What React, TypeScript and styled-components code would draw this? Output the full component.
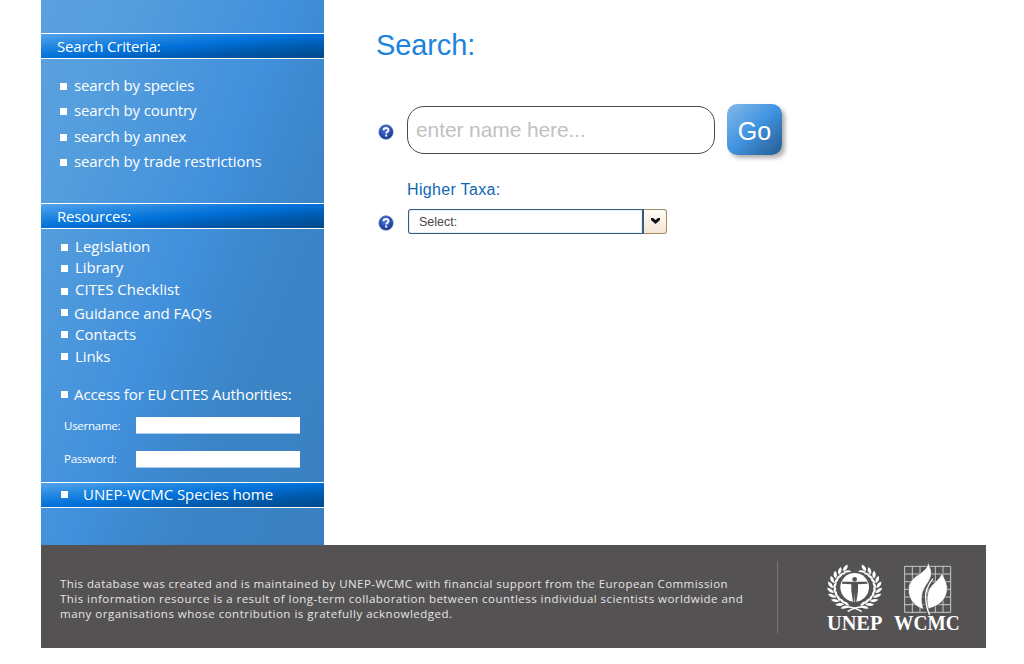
import React from "react";
import styled, { createGlobalStyle } from "styled-components";

const GlobalStyle = createGlobalStyle`
  * { box-sizing: border-box; }
  body { margin: 0; background: #fff; font-family: "Open Sans", "Noto Sans", sans-serif; }
  ul { list-style: none; margin: 0; padding: 0; }
  p, h1, h2 { margin: 0; font-weight: 400; }
`;

const Page = styled.div`
  width: 1024px;
  height: 664px;
  padding-left: 41px;
  overflow: hidden;
  background: #fff;
`;

const Columns = styled.div`
  display: flex;
  height: 545px;
`;

const Sidebar = styled.nav`
  width: 283px;
  height: 545px;
  padding-top: 33px;
  color: #fff;
  background: linear-gradient(112deg, #5ba0df 0%, #559edd 18%, #4190dc 49%, #3b84c6 70%, #3a80c1 100%);
`;

const Band = styled.h2<{ $inset?: number; $gap?: number }>`
  display: flex;
  align-items: center;
  gap: ${(p) => p.$gap ?? 0}px;
  height: 26px;
  padding: 0 0 1px ${(p) => p.$inset ?? 16}px;
  border-top: 1px solid #fff;
  border-bottom: 1px solid #fff;
  background: linear-gradient(to bottom right, #55a3ea 0%, #2186e0 28%, #0070d9 50%, #0058a8 75%, #004a8c 100%);
`;

const Bullet = styled.span<{ $drop?: number }>`
  flex: none;
  width: 7px;
  height: 7px;
  margin-top: ${(p) => p.$drop ?? 0}px;
  background: #fff;
`;

const List = styled.ul<{ $top: number; $height: number; $left: number }>`
  height: ${(p) => p.$height}px;
  padding: ${(p) => p.$top}px 0 0 ${(p) => p.$left}px;
`;

const Item = styled.li<{ $height: number; $gap?: number }>`
  display: flex;
  align-items: center;
  gap: ${(p) => p.$gap ?? 7}px;
  height: ${(p) => p.$height}px;
`;

const Label = styled.span<{ $spacing?: number; $lift?: number }>`
  padding-bottom: ${(p) => p.$lift ?? 2}px;
  font-size: 15px;
  line-height: 20px;
  letter-spacing: ${(p) => p.$spacing ?? -0.12}px;
  white-space: nowrap;
`;

const HomeBlock = styled.div`
  padding-top: 14px;
`;

const LoginRow = styled.label<{ $gap?: number }>`
  display: flex;
  align-items: center;
  height: 17px;
  margin-top: ${(p) => p.$gap ?? 0}px;
  padding-left: 23px;
`;

const LoginLabel = styled.span<{ $lift?: number }>`
  width: 72px;
  padding-bottom: ${(p) => p.$lift ?? 0}px;
  font-size: 11.5px;
  letter-spacing: -0.25px;
`;

const LoginInput = styled.input`
  width: 164px;
  height: 17px;
  padding: 0 4px;
  border: 0;
  border-bottom: 1px solid #a9cdf0;
  border-radius: 0;
  background: #fff;
  outline: 0;
`;

const Main = styled.main`
  flex: 1;
  padding: 28px 0 0 52px;
  font-family: "Liberation Sans", Arial, sans-serif;
`;

const Title = styled.h1`
  height: 34px;
  font-size: 29px;
  line-height: 34px;
  letter-spacing: -0.1px;
  color: #1d83dc;
`;

const SearchRow = styled.div`
  display: flex;
  align-items: flex-start;
  margin-top: 42px;
`;

const HelpSlot = styled.span<{ $top: number; $width: number }>`
  display: block;
  width: ${(p) => p.$width}px;
  padding: ${(p) => p.$top}px 0 0 2px;
  line-height: 0;
`;

const NameInput = styled.input`
  width: 308px;
  height: 48px;
  margin: 2px 12px 0 0;
  padding: 0 8px;
  border: 1px solid #4a4a4c;
  border-radius: 17px;
  background: #fff;
  font: 21px "Liberation Sans", Arial, sans-serif;
  letter-spacing: -0.1px;
  outline: 0;
  &::placeholder { color: #c1c1c3; opacity: 1; }
`;

const GoButton = styled.button`
  width: 55px;
  height: 51px;
  padding: 3px 0 0;
  border: 0;
  border-radius: 10px;
  color: #fff;
  font: 25px "Liberation Sans", Arial, sans-serif;
  background: linear-gradient(137deg, #84b9e8 0%, #3f93e0 50%, #3a84c9 62%, #265d93 100%);
  box-shadow: 3px 3px 4px rgba(70, 60, 60, 0.42);
`;

const TaxaLabel = styled.p`
  margin: 25px 0 0 31px;
  font-size: 16px;
  line-height: 20px;
  letter-spacing: 0.33px;
  color: #0f68b4;
`;

const TaxaRow = styled.div`
  display: flex;
  margin-top: 9px;
`;

const Select = styled.div`
  display: flex;
  width: 259px;
  height: 25px;
`;

const SelectValue = styled.div`
  flex: 1;
  padding-left: 10px;
  border: 1px solid #3c5a80;
  border-right-width: 2px;
  border-radius: 3px 0 0 3px;
  box-shadow: inset 0 0 0 1px #e3f2fa;
  color: #4b4648;
  font-size: 12.5px;
  line-height: 24px;
`;

const SelectArrow = styled.div`
  display: grid;
  place-items: center;
  width: 23px;
  padding: 0 0 2px 1px;
  border: 1px solid #a08c62;
  border-left: 0;
  border-radius: 0 3px 3px 0;
  background: linear-gradient(#fffdf8, #f3e6d2);
`;

const Footer = styled.footer`
  display: flex;
  width: 945px;
  height: 103px;
  padding-left: 19px;
  background: #545253;
`;

const Credits = styled.div`
  width: 718px;
  height: 72px;
  margin-top: 16px;
  padding-top: 15px;
  border-right: 1px solid #777576;
`;

const CreditLine = styled.p<{ $spacing: number }>`
  font-size: 11.5px;
  line-height: 15px;
  letter-spacing: ${(p) => p.$spacing}px;
  color: #e6e5e5;
  white-space: nowrap;
`;

const Logos = styled.div`
  display: flex;
  gap: 5px;
  padding: 12px 0 0 47px;
`;

function HelpIcon() {
  return (
    <svg width="16" height="16" viewBox="0 0 16 16">
      <defs>
        <radialGradient id="help" cx="0.45" cy="0.35" r="0.65">
          <stop offset="0" stopColor="#4f7cd6" />
          <stop offset="0.6" stopColor="#2a4fb2" />
          <stop offset="1" stopColor="#17357f" />
        </radialGradient>
      </defs>
      <circle cx="8" cy="8" r="7.4" fill="url(#help)" stroke="#a9b7dc" strokeWidth="0.6" />
      <path d="M5.6 6.3C5.6 3.2 10.6 3.3 10.5 6.2C10.4 7.8 8.2 7.7 8.2 9.6" fill="none" stroke="#fff" strokeWidth="1.9" />
      <rect x="7.2" y="10.6" width="2" height="2" fill="#fff" />
    </svg>
  );
}

const leafAngles = [27, 42, 57, 72, 87, 102, 117, 132, 147, 161];

function Wreath({ mirrored }: { mirrored?: boolean }) {
  return (
    <g transform={mirrored ? "translate(178 0) scale(-1 1)" : undefined}>
      <g transform="translate(89 92) scale(1 0.87)">
        {leafAngles.map((a) => (
          <g key={a} transform={`rotate(${-a}) translate(0 -65)`}>
            <path d="M-5 0Q-1 -16 17 -16Q13 -1 -5 0Z" fill="#fff" />
            <path d="M-5 1Q2 12 17 10Q11 -1 -5 1Z" fill="#fff" />
          </g>
        ))}
      </g>
      <path d="M66 150Q90 150 110 164" fill="none" stroke="#fff" strokeWidth="4" />
    </g>
  );
}

function UnepLogo() {
  return (
    <svg width="60" height="80" viewBox="0 0 180 240">
      <Wreath />
      <Wreath mirrored />
      <circle cx="89" cy="91" r="46" fill="#545253" />
      <circle cx="89" cy="91" r="43" fill="#fff" />
      <g fill="#545253">
        <circle cx="89" cy="67" r="7" />
        <path d="M51 74H127V80L99 82V102L94 134H90L89 108L88 134H84L79 102V82L51 80Z" />
      </g>
      <text x="6" y="218" textLength="166" lengthAdjust="spacingAndGlyphs" fill="#fff" fontFamily="Liberation Serif, serif" fontWeight="700" fontSize="64">UNEP</text>
    </svg>
  );
}

const gridLines = [0, 1, 2, 3, 4, 5, 6].map((n) => n * 23);

function WcmcLogo() {
  return (
    <svg width="80" height="80" viewBox="0 0 240 240">
      <g stroke="#c9c8c8" strokeWidth="3">
        {gridLines.map((n) => (
          <React.Fragment key={n}>
            <path d={`M${44 + n} 28V166`} />
            <path d={`M44 ${28 + n}H182`} />
          </React.Fragment>
        ))}
      </g>
      <g fill="#fff" stroke="#545253" strokeWidth="2">
        <path d="M114 14C115 48 66 52 57 84C49 117 68 148 101 157C93 133 95 111 103 95C111 78 126 66 124 44C123 33 117 24 114 14Z" />
        <path d="M156 44C151 72 121 78 114 105C109 123 111 142 115 155C151 148 174 122 172 91C171 72 160 62 156 44Z" />
      </g>
      <path d="M128 66Q102 95 104 124Q106 154 117 172" fill="none" stroke="#545253" strokeWidth="8" />
      <path d="M129 65Q104 96 107 124Q109 153 119 174" fill="none" stroke="#fff" strokeWidth="4" />
      <text x="12" y="218" textLength="197" lengthAdjust="spacingAndGlyphs" fill="#fff" fontFamily="Liberation Serif, serif" fontWeight="700" fontSize="64">WCMC</text>
    </svg>
  );
}

const criteria = [
  { text: "search by species", height: 25, drop: 1 },
  { text: "search by country", height: 25, drop: 1 },
  { text: "search by annex", height: 27, drop: 1 },
  { text: "search by trade restrictions", height: 23, drop: 2 },
];

const resources = [
  { text: "Legislation", height: 21, drop: 2, gap: 7, spacing: 0.05 },
  { text: "Library", height: 21, drop: 2, gap: 7, spacing: -0.12 },
  { text: "CITES Checklist", height: 23, drop: 4, gap: 7, spacing: 0 },
  { text: "Guidance and FAQ\u2019s", height: 25, drop: -2, gap: 6, spacing: -0.1 },
  { text: "Contacts", height: 17, drop: 0, gap: 7, spacing: 0 },
  { text: "Links", height: 27, drop: 0, gap: 7, spacing: -0.1 },
];

export default function App() {
  return (
    <Page>
      <GlobalStyle />
      <Columns>
        <Sidebar>
          <Band><Label $spacing={-0.2} $lift={0}>Search Criteria:</Label></Band>
          <List $top={14} $height={144} $left={19}>
            {criteria.map((c) => (
              <Item key={c.text} $height={c.height}>
                <Bullet $drop={c.drop} />
                <Label>{c.text}</Label>
              </Item>
            ))}
          </List>
          <Band><Label $spacing={-0.2} $lift={0}>Resources:</Label></Band>
          <List $top={7} $height={156} $left={20}>
            {resources.map((r) => (
              <Item key={r.text} $height={r.height} $gap={r.gap}>
                <Bullet $drop={r.drop} />
                <Label $spacing={r.spacing}>{r.text}</Label>
              </Item>
            ))}
          </List>
          <List $top={0} $height={32} $left={20}>
            <Item $height={19} $gap={6}>
              <Bullet />
              <Label $spacing={-0.1}>Access for EU CITES Authorities:</Label>
            </Item>
          </List>
          <LoginRow>
            <LoginLabel>Username:</LoginLabel>
            <LoginInput />
          </LoginRow>
          <LoginRow $gap={17}>
            <LoginLabel $lift={2}>Password:</LoginLabel>
            <LoginInput type="password" />
          </LoginRow>
          <HomeBlock>
            <Band $inset={20} $gap={15}>
              <Bullet $drop={-1} />
              <Label $spacing={-0.06}>UNEP-WCMC Species home</Label>
            </Band>
          </HomeBlock>
        </Sidebar>
        <Main>
          <Title>Search:</Title>
          <SearchRow>
            <HelpSlot $top={20} $width={31}><HelpIcon /></HelpSlot>
            <NameInput placeholder="enter name here..." />
            <GoButton>Go</GoButton>
          </SearchRow>
          <TaxaLabel>Higher Taxa:</TaxaLabel>
          <TaxaRow>
            <HelpSlot $top={6} $width={32}><HelpIcon /></HelpSlot>
            <Select>
              <SelectValue>Select:</SelectValue>
              <SelectArrow>
                <svg width="9" height="6" viewBox="0 0 9 6">
                  <path d="M0 0H2L4.500 2L7 0H9V2L4.500 6L0 2Z" fill="#111" />
                </svg>
              </SelectArrow>
            </Select>
          </TaxaRow>
        </Main>
      </Columns>
      <Footer>
        <Credits>
          <CreditLine $spacing={0.43}>This database was created and is maintained by UNEP-WCMC with financial support from the European Commission</CreditLine>
          <CreditLine $spacing={0.46}>This information resource is a result of long-term collaboration between countless individual scientists worldwide and</CreditLine>
          <CreditLine $spacing={0.5}>many organisations whose contribution is gratefully acknowledged.</CreditLine>
        </Credits>
        <Logos>
          <UnepLogo />
          <WcmcLogo />
        </Logos>
      </Footer>
    </Page>
  );
}
